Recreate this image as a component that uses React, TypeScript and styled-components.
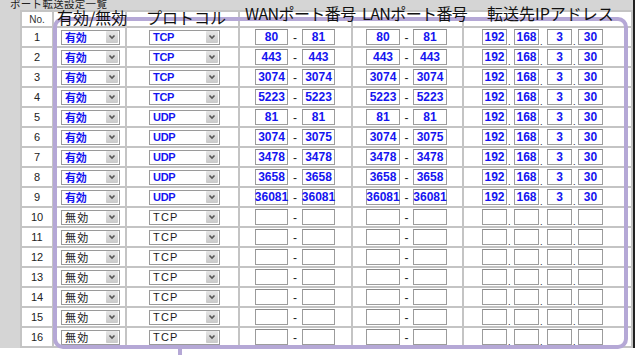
import React from "react";
import styled, { createGlobalStyle } from "styled-components";

const Global = createGlobalStyle`
  html, body { margin: 0; padding: 0; background: #ffffff; }
  body {
    width: 637px; height: 355px; overflow: hidden;
    font-family: "Liberation Sans", "Noto Sans CJK JP", sans-serif;
  }
`;

const Page = styled.div`
  position: relative;
  width: 637px;
  height: 355px;
`;

const Frame = styled.div`
  width: 633px;
  height: 348px;
  background: #d5d5d5;
  border-right: 2px solid #222;
  display: flex;
  flex-direction: column;
  overflow: hidden;
`;

const Title = styled.div`
  height: 10px;
  line-height: 10px;
  margin-top: -1px;
  padding-left: 10px;
  font-family: "Noto Sans CJK JP", sans-serif;
  font-size: 10.5px;
  letter-spacing: 0.3px;
  color: #222;
  white-space: nowrap;
`;

const Table = styled.div`
  margin-top: 1px;
  margin-left: 20px;
  padding: 2px;
  background: #c4c4c4;
  display: flex;
  flex-direction: column;
  gap: 2px;
`;

const Row = styled.div<{ $h: number }>`
  display: grid;
  grid-template-columns: 30px 71px 111px 111px 109px 1fr;
  gap: 2px;
  height: ${(p) => p.$h}px;
`;

const Cell = styled.div<{ $pad?: number; $center?: boolean }>`
  background: #ffffff;
  display: flex;
  align-items: center;
  justify-content: ${(p) => (p.$center ? "center" : "flex-start")};
  padding-left: ${(p) => p.$pad ?? 0}px;
  overflow: hidden;
`;

const HeadText = styled.span`
  font-family: "Liberation Sans", sans-serif;
  font-size: 10px;
  color: #333;
  white-space: nowrap;
`;

const Num = styled.span`
  font-size: 11px;
  color: #222;
`;

const SelectBox = styled.div<{ $w: number }>`
  width: ${(p) => p.$w}px;
  height: 15px;
  box-sizing: border-box;
  border: 1px solid #9a9a9a;
  background: #fff;
  display: flex;
  align-items: center;
  justify-content: space-between;
  padding: 0 1px 0 3px;
`;

const SelText = styled.span<{ $on: boolean }>`
  font-family: "Liberation Sans", "Noto Sans CJK JP", sans-serif;
  font-size: 11px;
  font-weight: ${(p) => (p.$on ? 700 : 400)};
  letter-spacing: ${(p) => (p.$on ? "-0.3px" : "1.2px")};
  color: ${(p) => (p.$on ? "#1414f0" : "#1a1a1a")};
  white-space: nowrap;
`;

const Arrow = styled.span`
  width: 12px;
  height: 12px;
  box-sizing: border-box;
  background: linear-gradient(#e6e6e6, #c9c9c9);
  border-radius: 1px;
  display: flex;
  align-items: center;
  justify-content: center;
`;

const Pair = styled.div`
  display: flex;
  align-items: center;
`;

const Input = styled.div<{ $w: number }>`
  width: ${(p) => p.$w}px;
  height: 16px;
  box-sizing: border-box;
  border: 1px solid #9c9c9c;
  border-top-color: #8a8a8a;
  background: #fff;
  display: flex;
  align-items: center;
  justify-content: center;
  font-family: "Liberation Sans", sans-serif;
  font-size: 12px;
  font-weight: 700;
  color: #1414f0;
  white-space: nowrap;
  overflow: visible;
`;

const Dash = styled.span<{ $w: number }>`
  width: ${(p) => p.$w}px;
  text-align: center;
  font-family: "Liberation Sans", sans-serif;
  font-size: 12px;
  line-height: 12px;
  color: #222;
  padding-top: 2px;
`;

const Dot = styled.span<{ $w: number }>`
  width: ${(p) => p.$w}px;
  align-self: flex-end;
  font-size: 9px;
  line-height: 6px;
  color: #111;
  padding-left: 1px;
  box-sizing: border-box;
`;

const Outline = styled.div`
  position: absolute;
  left: 53px;
  top: 17px;
  width: 575px;
  height: 332px;
  box-sizing: border-box;
  border: 4px solid #b5a8d6;
  border-radius: 10px;
  pointer-events: none;
`;

const Tail = styled.div`
  position: absolute;
  left: 178px;
  top: 348px;
  width: 4px;
  height: 7px;
  background: #b5a8d6;
`;

const Label = styled.span<{ $x: number; $y: number; $tight?: boolean }>`
  position: absolute;
  left: ${(p) => p.$x}px;
  top: ${(p) => p.$y}px;
  font-family: "Noto Sans CJK JP", sans-serif;
  font-size: 16px;
  line-height: 18px;
  letter-spacing: ${(p) => (p.$tight ? "-0.6px" : "0")};
  color: #111;
  white-space: nowrap;
`;

type Rule = {
  on: boolean;
  proto: string;
  wan: [string, string];
  lan: [string, string];
  ip: string[];
};

const active: [string, string, string, string, string][] = [
  ["TCP", "80", "81", "80", "81"],
  ["TCP", "443", "443", "443", "443"],
  ["TCP", "3074", "3074", "3074", "3074"],
  ["TCP", "5223", "5223", "5223", "5223"],
  ["UDP", "81", "81", "81", "81"],
  ["UDP", "3074", "3075", "3074", "3075"],
  ["UDP", "3478", "3478", "3478", "3478"],
  ["UDP", "3658", "3658", "3658", "3658"],
  ["UDP", "36081", "36081", "36081", "36081"],
];

const rules: Rule[] = Array.from({ length: 16 }, (_, i) => {
  const a = active[i];
  if (a) {
    return { on: true, proto: a[0], wan: [a[1], a[2]], lan: [a[3], a[4]], ip: ["192", "168", "3", "30"] };
  }
  return { on: false, proto: "TCP", wan: ["", ""], lan: ["", ""], ip: ["", "", "", ""] };
});

const Chevron = () => (
  <svg width="8" height="6" viewBox="0 0 8 6">
    <polyline points="1.5,1.5 4,4 6.5,1.5" fill="none" stroke="#555" strokeWidth="1.6" />
  </svg>
);

const Select = ({ w, on, text }: { w: number; on: boolean; text: string }) => (
  <SelectBox $w={w}>
    <SelText $on={on}>{text}</SelText>
    <Arrow>
      <Chevron />
    </Arrow>
  </SelectBox>
);

export default function App() {
  return (
    <Page>
      <Global />
      <Frame>
        <Title>ポート転送設定一覧</Title>
        <Table>
          <Row $h={14}>
            <Cell $center>
              <HeadText>No.</HeadText>
            </Cell>
            <Cell />
            <Cell />
            <Cell />
            <Cell />
            <Cell />
          </Row>
          {rules.map((r, i) => (
            <Row $h={18} key={i}>
              <Cell $center>
                <Num>{i + 1}</Num>
              </Cell>
              <Cell $pad={7}>
                <Select w={59} on={r.on} text={r.on ? "有効" : "無効"} />
              </Cell>
              <Cell $pad={22}>
                <Select w={71} on={r.on} text={r.proto} />
              </Cell>
              <Cell $pad={15}>
                <Pair>
                  <Input $w={33}>{r.wan[0]}</Input>
                  <Dash $w={14}>-</Dash>
                  <Input $w={33}>{r.wan[1]}</Input>
                </Pair>
              </Cell>
              <Cell $pad={13}>
                <Pair>
                  <Input $w={34}>{r.lan[0]}</Input>
                  <Dash $w={13}>-</Dash>
                  <Input $w={34}>{r.lan[1]}</Input>
                </Pair>
              </Cell>
              <Cell $pad={18}>
                <Pair>
                  <Input $w={25}>{r.ip[0]}</Input>
                  <Dot $w={7}>.</Dot>
                  <Input $w={25}>{r.ip[1]}</Input>
                  <Dot $w={8}>.</Dot>
                  <Input $w={25}>{r.ip[2]}</Input>
                  <Dot $w={6}>.</Dot>
                  <Input $w={25}>{r.ip[3]}</Input>
                </Pair>
              </Cell>
            </Row>
          ))}
        </Table>
      </Frame>
      <Outline />
      <Tail />
      <Label $x={57} $y={8}>有効/無効</Label>
      <Label $x={146} $y={8}>プロトコル</Label>
      <Label $x={245} $y={4} $tight>WANポート番号</Label>
      <Label $x={362} $y={4} $tight>LANポート番号</Label>
      <Label $x={487} $y={4}>転送先IPアドレス</Label>
    </Page>
  );
}
